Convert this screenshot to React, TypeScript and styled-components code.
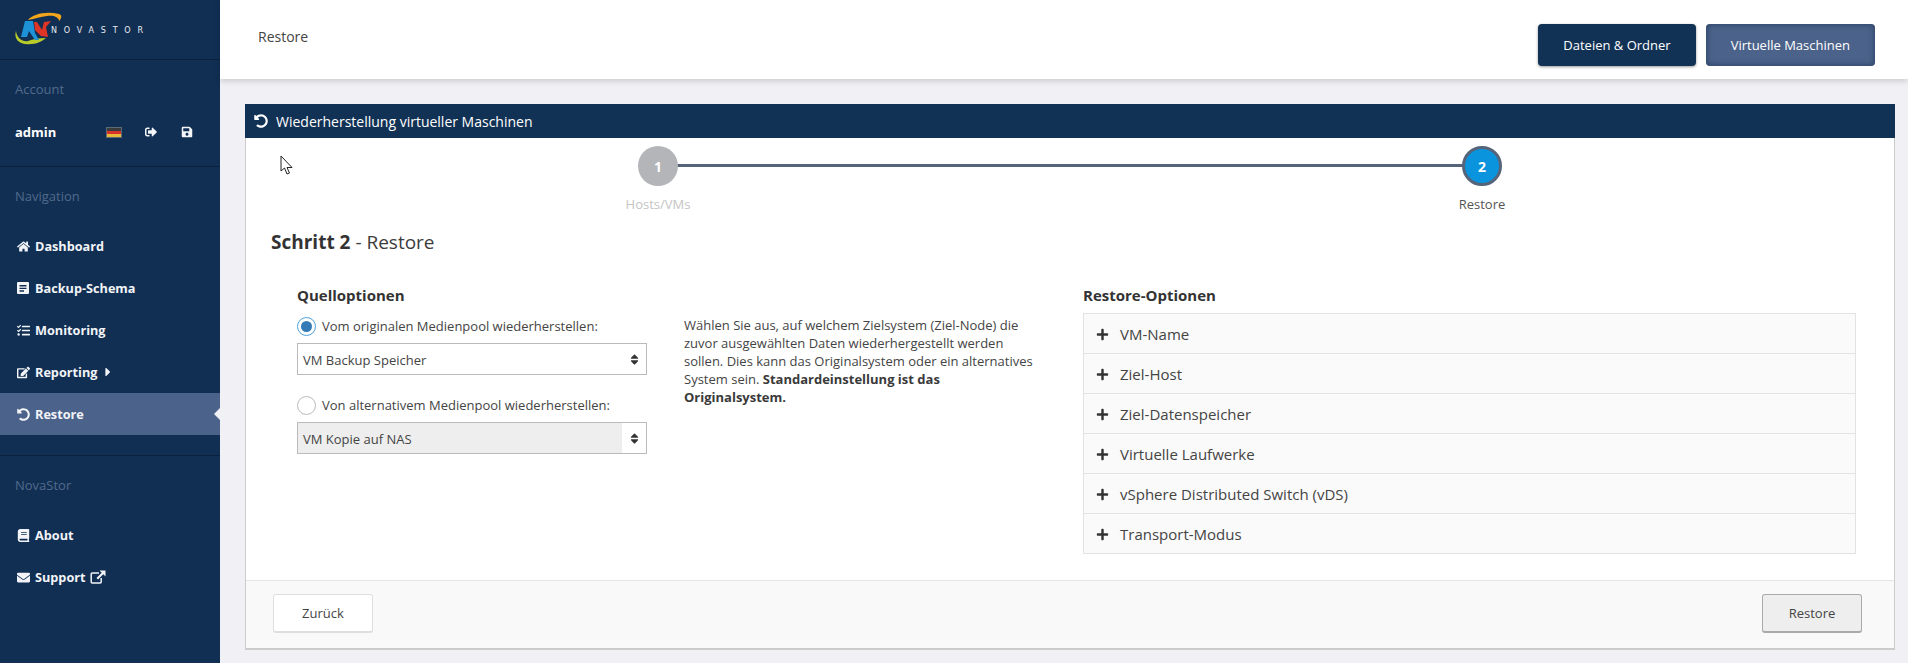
import React from "react";
import styled, { createGlobalStyle } from "styled-components";
import { FaHome, FaTasks, FaEdit, FaBook, FaEnvelope, FaCaretRight, FaPlus, FaSort, FaUndoAlt, FaSignOutAlt, FaSave } from "react-icons/fa";

const Global = createGlobalStyle`
  html, body { margin: 0; padding: 0; height: 100%; overflow: hidden; background: #f0f0f5; }
  body { font-family: "Open Sans", "Noto Sans", sans-serif; font-size: 13px; color: #333; }
  * { box-sizing: border-box; }
`;

const Page = styled.div`
  display: flex;
  height: 663px;
`;

const Sidebar = styled.aside`
  width: 220px;
  flex: none;
  background: #112f53;
  color: #fff;
`;

const LogoBar = styled.div`
  height: 60px;
  padding: 12px 0 0 15px;
  display: flex;
  align-items: flex-start;
  border-bottom: 1px solid #0a2240;
`;

const LogoText = styled.span`
  font-family: "DejaVu Sans", sans-serif;
  font-size: 8px;
  line-height: 10px;
  letter-spacing: 6.800px;
  color: #e8ecf2;
  margin: 12px 0 0 -12px;
  padding-top: 2px;
`;

const SectionLabel = styled.div`
  height: 20px;
  line-height: 20px;
  padding-left: 15px;
  color: #526a8c;
  font-size: 13px;
`;

const AccountSection = styled.div`
  padding-top: 19px;
  height: 107px;
  border-bottom: 1px solid #0a2240;
`;

const AccountRow = styled.div`
  display: flex;
  align-items: center;
  height: 20px;
  margin-top: 23px;
  padding-left: 15px;
  font-weight: 700;
  font-size: 13px;
`;

const UserName = styled.span`
  width: 91px;
`;

const Flag = styled.span`
  width: 16px;
  height: 11px;
  border: 1px solid #5d6a78;
  margin-right: 23px;
  background: linear-gradient(#3b3b3b 0 33%, #d8322c 33% 66%, #e9b93a 66%);
`;

const AccountIcon = styled.span`
  display: inline-flex;
  width: 13px;
  margin-right: 23px;
  font-size: 12px;
  color: #f3f5f8;
`;

const NavSection = styled.nav<{ $bordered?: boolean }>`
  padding-top: 19px;
  ${(p) => (p.$bordered ? "height: 289px; border-bottom: 1px solid #0a2240;" : "")}
`;

const NavList = styled.div`
  margin-top: 19px;
`;

const NavRow = styled.div<{ $active?: boolean }>`
  position: relative;
  height: 42px;
  display: flex;
  align-items: center;
  padding-left: 16px;
  font-weight: 700;
  font-size: 12.700px;
  color: #f2f4f7;
  background: ${(p) => (p.$active ? "#4b628a" : "transparent")};
  ${(p) =>
    p.$active
      ? `&::after {
          content: "";
          position: absolute;
          right: 0;
          top: 50%;
          margin-top: -6px;
          border: 6px solid transparent;
          border-left: 0;
          border-right-color: #f0f0f5;
        }`
      : ""}
`;

const NavIcon = styled.span`
  display: inline-flex;
  justify-content: center;
  width: 14px;
  margin-right: 5px;
  font-size: 13px;
`;

const Trailing = styled.span`
  display: inline-flex;
  margin-left: 4px;
  font-size: 14px;
`;

const Main = styled.main`
  flex: 1;
  min-width: 0;
  display: flex;
  flex-direction: column;
`;

const TopBar = styled.header`
  height: 79px;
  flex: none;
  background: #fff;
  box-shadow: 0 2px 6px rgba(0, 0, 0, 0.16);
  display: flex;
  justify-content: space-between;
  padding: 24px 33px 0 38px;
`;

const PageTitle = styled.div`
  font-size: 14px;
  line-height: 26px;
  color: #444;
`;

const TopButtons = styled.div`
  display: flex;
  gap: 10px;
`;

const TopButton = styled.div<{ $active?: boolean }>`
  height: 42px;
  padding: 0 25px;
  display: flex;
  align-items: center;
  border-radius: 4px;
  color: #fff;
  font-size: 13px;
  background: ${(p) => (p.$active ? "#4b628a" : "#123255")};
  box-shadow: ${(p) =>
    p.$active ? "inset 0 0 6px rgba(10,30,60,0.55)" : "0 1px 3px rgba(0,0,0,0.4)"};
`;

const Content = styled.div`
  padding: 25px 13px 0 25px;
`;

const Panel = styled.section`
  position: relative;
  background: #fff;
  border: solid #ccc;
  border-width: 0 1px 2px 1px;
`;

const PanelTitle = styled.div`
  height: 34px;
  margin: 0 -1px;
  background: #123255;
  color: #fff;
  font-size: 14px;
  display: flex;
  align-items: center;
  padding-left: 9px;
  gap: 8px;
`;

const Cursor = styled.svg`
  position: absolute;
  left: 34px;
  top: 51px;
`;

const Stepper = styled.div`
  display: grid;
  grid-template-columns: 1fr 1fr;
  padding-top: 8px;
`;

const Step = styled.div<{ $connected?: boolean }>`
  position: relative;
  display: flex;
  flex-direction: column;
  align-items: center;
  ${(p) =>
    p.$connected
      ? `&::before {
          content: "";
          position: absolute;
          top: 18px;
          left: -50%;
          right: 50%;
          height: 3px;
          background: #56647a;
        }`
      : ""}
`;

const StepCircle = styled.div<{ $current?: boolean }>`
  position: relative;
  z-index: 1;
  width: 40px;
  height: 40px;
  border-radius: 50%;
  display: flex;
  align-items: center;
  justify-content: center;
  color: #fff;
  font-weight: 700;
  font-size: 14px;
  background: ${(p) => (p.$current ? "#0a94de" : "#b3b5b9")};
  border: ${(p) => (p.$current ? "3px solid #56647a" : "0")};
`;

const StepLabel = styled.div<{ $current?: boolean }>`
  margin-top: 8px;
  line-height: 20px;
  font-size: 13px;
  color: ${(p) => (p.$current ? "#555" : "#c4c4c4")};
`;

const Heading = styled.h2`
  margin: 16px 0 0 25px;
  font-size: 19px;
  line-height: 24px;
  font-weight: 400;
  color: #3c3c3c;
  b {
    font-weight: 700;
    color: #333;
  }
`;

const Columns = styled.div`
  display: grid;
  grid-template-columns: 350px 362px 1fr;
  column-gap: 37px;
  padding: 31px 38px 26px 51px;
`;

const ColumnTitle = styled.h3`
  margin: 0;
  font-size: 15px;
  line-height: 20px;
  font-weight: 700;
  color: #333;
`;

const RadioRow = styled.label<{ $top: number }>`
  display: flex;
  align-items: center;
  gap: 6px;
  height: 20px;
  margin-top: ${(p) => p.$top}px;
  font-size: 13px;
  color: #444;
`;

const Radio = styled.span<{ $checked?: boolean }>`
  width: 19px;
  height: 19px;
  flex: none;
  border-radius: 50%;
  background: #fff;
  border: 1px solid ${(p) => (p.$checked ? "#4ea2dc" : "#bbb")};
  display: flex;
  align-items: center;
  justify-content: center;
  &::after {
    content: "";
    width: 11px;
    height: 11px;
    border-radius: 50%;
    background: ${(p) => (p.$checked ? "#337ab7" : "transparent")};
  }
`;

const Select = styled.div`
  height: 32px;
  margin-top: 7px;
  border: 1px solid #bbb;
  display: flex;
  align-items: stretch;
  background: #fff;
  font-size: 13px;
  color: #444;
`;

const SelectValue = styled.div<{ $disabled?: boolean }>`
  flex: 1;
  display: flex;
  align-items: center;
  padding: 1px 0 0 5px;
  background: ${(p) => (p.$disabled ? "#eeeeee" : "#fff")};
`;

const SelectArrow = styled.div`
  width: 24px;
  display: flex;
  align-items: center;
  justify-content: center;
  font-size: 13px;
  color: #333;
`;

const Help = styled.p`
  margin: 31px 0 0 0;
  width: 352px;
  font-size: 13px;
  line-height: 18px;
  color: #444;
  b {
    font-weight: 700;
    color: #3a3a3a;
  }
`;

const Accordion = styled.div`
  margin-top: 8px;
  border: 1px solid #e3e3e3;
  background: #fafafa;
`;

const AccordionRow = styled.div`
  height: 40px;
  display: flex;
  align-items: center;
  padding-left: 12px;
  gap: 11px;
  font-size: 15px;
  color: #444;
  &:first-child {
    height: 39px;
  }
  & + & {
    border-top: 1px solid #e3e3e3;
  }
`;

const PlusIcon = styled.span`
  display: inline-flex;
  font-size: 13px;
  color: #333;
  margin-top: 2px;
`;

const Footer = styled.footer`
  height: 68px;
  background: #f9f9f9;
  border-top: 1px solid #e5e5e5;
  display: flex;
  justify-content: space-between;
  padding: 13px 32px 0 27px;
`;

const FooterButton = styled.div<{ $disabled?: boolean }>`
  width: 100px;
  height: 39px;
  display: flex;
  align-items: center;
  justify-content: center;
  border-radius: 3px;
  font-size: 13px;
  color: #444;
  background: ${(p) => (p.$disabled ? "#eeeeee" : "#fff")};
  border: 1px solid ${(p) => (p.$disabled ? "#aaa" : "#dedede")};
  border-bottom-width: 2px;
`;

const BackupIcon = () => (
  <svg width="12" height="12" viewBox="0 0 12 12" aria-hidden>
    <path
      fill="currentColor"
      fillRule="evenodd"
      d="M1 0h10a1 1 0 0 1 1 1v10a1 1 0 0 1-1 1H1a1 1 0 0 1-1-1V1a1 1 0 0 1 1-1zM2.5 3v1.4h7V3zM2.5 5.7v1.4h7V5.700zM2.500 8.300v1.400h4.500v-1.400z"
    />
  </svg>
);

const ExternalIcon = () => (
  <svg width="16" height="14" viewBox="0 0 16 14" aria-hidden>
    <path d="M9 3H2.200a1 1 0 0 0-1 1v8a1 1 0 0 0 1 1h8a1 1 0 0 0 1-1V8" fill="none" stroke="currentColor" strokeWidth="1.5" />
    <path d="M9.500 0.500H15.500V6.500L13.300 4.300 8 9.500 6.500 8 11.700 2.700z" fill="currentColor" />
  </svg>
);

const Logo = () => (
  <svg width="48" height="34" viewBox="0 0 48 34" aria-hidden>
    <path d="M13 8C18 2 31-1 44 2 47 3 47 6 44 9 44 5 38 3 32 4 26 4.500 20 7 13 8z" fill="#f2a51d" />
    <path d="M1 19C-1 25 2 31 10 32 20 33 26 30 31 26 24 26 18 27 13 29 8 30 2 27 1 19z" fill="#b9cc2a" />
    <path d="M10 9H18L20 21 24 28H20L14 19 12 25H6z" fill="#1d92d6" />
    <path d="M19 10H22L27 18 29 10 36 9 31 15 33 25 26 24 20 18z" fill="#df3526" />
  </svg>
);

const MouseCursor = () => (
  <Cursor width="14" height="21" viewBox="0 0 14 21" aria-hidden>
    <path d="M1 1V16L4.500 13 7 19 9.500 18 7 12.500H12z" fill="#fff" stroke="#222" strokeWidth="1" />
  </Cursor>
);

const navMain = [
  { label: "Dashboard", icon: <FaHome /> },
  { label: "Backup-Schema", icon: <BackupIcon /> },
  { label: "Monitoring", icon: <FaTasks /> },
  { label: "Reporting", icon: <FaEdit />, trailing: <FaCaretRight /> },
  { label: "Restore", icon: <FaUndoAlt />, active: true },
];

const navInfo = [
  { label: "About", icon: <FaBook /> },
  { label: "Support", icon: <FaEnvelope />, trailing: <ExternalIcon /> },
];

const options = [
  "VM-Name",
  "Ziel-Host",
  "Ziel-Datenspeicher",
  "Virtuelle Laufwerke",
  "vSphere Distributed Switch (vDS)",
  "Transport-Modus",
];

export default function App() {
  return (
    <>
      <Global />
      <Page>
        <Sidebar>
          <LogoBar>
            <Logo />
            <LogoText>NOVASTOR</LogoText>
          </LogoBar>
          <AccountSection>
            <SectionLabel>Account</SectionLabel>
            <AccountRow>
              <UserName>admin</UserName>
              <Flag />
              <AccountIcon><FaSignOutAlt /></AccountIcon>
              <AccountIcon><FaSave /></AccountIcon>
            </AccountRow>
          </AccountSection>
          <NavSection $bordered>
            <SectionLabel>Navigation</SectionLabel>
            <NavList>
              {navMain.map((n) => (
                <NavRow key={n.label} $active={n.active}>
                  <NavIcon>{n.icon}</NavIcon>
                  {n.label}
                  {n.trailing && <Trailing>{n.trailing}</Trailing>}
                </NavRow>
              ))}
            </NavList>
          </NavSection>
          <NavSection>
            <SectionLabel>NovaStor</SectionLabel>
            <NavList>
              {navInfo.map((n) => (
                <NavRow key={n.label}>
                  <NavIcon>{n.icon}</NavIcon>
                  {n.label}
                  {n.trailing && <Trailing>{n.trailing}</Trailing>}
                </NavRow>
              ))}
            </NavList>
          </NavSection>
        </Sidebar>
        <Main>
          <TopBar>
            <PageTitle>Restore</PageTitle>
            <TopButtons>
              <TopButton>Dateien &amp; Ordner</TopButton>
              <TopButton $active>Virtuelle Maschinen</TopButton>
            </TopButtons>
          </TopBar>
          <Content>
            <Panel>
              <PanelTitle>
                <FaUndoAlt size={14} />
                Wiederherstellung virtueller Maschinen
              </PanelTitle>
              <MouseCursor />
              <Stepper>
                <Step>
                  <StepCircle>1</StepCircle>
                  <StepLabel>Hosts/VMs</StepLabel>
                </Step>
                <Step $connected>
                  <StepCircle $current>2</StepCircle>
                  <StepLabel $current>Restore</StepLabel>
                </Step>
              </Stepper>
              <Heading><b>Schritt 2</b> - Restore</Heading>
              <Columns>
                <div>
                  <ColumnTitle>Quelloptionen</ColumnTitle>
                  <RadioRow $top={11}>
                    <Radio $checked />
                    Vom originalen Medienpool wiederherstellen:
                  </RadioRow>
                  <Select>
                    <SelectValue>VM Backup Speicher</SelectValue>
                    <SelectArrow><FaSort /></SelectArrow>
                  </Select>
                  <RadioRow $top={20}>
                    <Radio />
                    Von alternativem Medienpool wiederherstellen:
                  </RadioRow>
                  <Select>
                    <SelectValue $disabled>VM Kopie auf NAS</SelectValue>
                    <SelectArrow><FaSort /></SelectArrow>
                  </Select>
                </div>
                <Help>
                  Wählen Sie aus, auf welchem Zielsystem (Ziel-Node) die zuvor ausgewählten Daten wiederhergestellt werden sollen. Dies kann das Originalsystem oder ein alternatives System sein. <b>Standardeinstellung ist das Originalsystem.</b>
                </Help>
                <div>
                  <ColumnTitle>Restore-Optionen</ColumnTitle>
                  <Accordion>
                    {options.map((o) => (
                      <AccordionRow key={o}>
                        <PlusIcon><FaPlus /></PlusIcon>
                        {o}
                      </AccordionRow>
                    ))}
                  </Accordion>
                </div>
              </Columns>
              <Footer>
                <FooterButton>Zurück</FooterButton>
                <FooterButton $disabled>Restore</FooterButton>
              </Footer>
            </Panel>
          </Content>
        </Main>
      </Page>
    </>
  );
}
